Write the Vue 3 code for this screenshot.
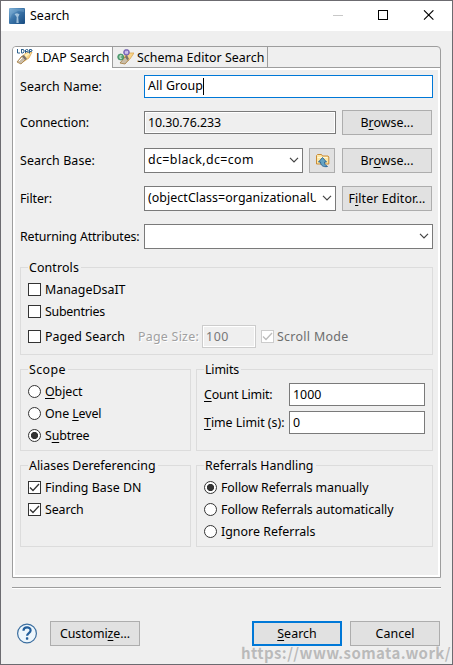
<script setup>
import { ref } from 'vue'

// Spreads a label's glyphs so that it fills the given width in pixels.
const vFit = {
  mounted(el, { value }) {
    const natural = el.getBoundingClientRect().width
    el.style.letterSpacing = (value - natural) / el.textContent.length + 'px'
  },
}

const controls = ref([
  { label: 'ManageDsaIT', width: 80.5, on: false },
  { label: 'Subentries', width: 60, on: false },
])
const scopes = [
  { pre: '', key: 'O', post: 'bject', width: 37.5, on: false },
  { pre: 'One ', key: 'L', post: 'evel', width: 56.5, on: false },
  { pre: 'S', key: 'u', post: 'btree', width: 44.5, on: true },
]
const aliases = [
  { label: 'Finding Base DN', width: 96.5 },
  { label: 'Search', width: 38.5 },
]
const referrals = [
  { label: 'Follow Referrals manually', width: 147.5, on: true },
  { label: 'Follow Referrals automatically', width: 172.5, on: false },
  { label: 'Ignore Referrals', width: 94.5, on: false },
]
</script>

<template>
  <div class="window">
    <header class="titlebar">
      <svg class="app-icon" width="16" height="16" viewBox="0 0 16 16">
        <defs>
          <linearGradient id="sky" x1="0" y1="0" x2="1" y2="1">
            <stop offset="0" stop-color="#7fb2d8" /><stop offset=".45" stop-color="#3d76aa" /><stop offset="1" stop-color="#174a80" />
          </linearGradient>
        </defs>
        <rect width="16" height="16" rx="1" fill="url(#sky)" />
        <path d="M1 1h14v3L9 3 3 6 1 11z" fill="#91bddd" opacity=".3" />
        <path d="M7.400 15 7.700 9 5.500 6 8 5.200l2.500 1L9.200 9l.5 6z" fill="#c4dced" opacity=".75" />
      </svg>
      <span v-fit="39.5" class="title">Search</span>
      <svg class="win-buttons" width="104" height="12" viewBox="0 0 104 12">
        <path d="M0 5.500h10" stroke="#c8c8c8" />
        <rect x="45.500" y=".5" width="9" height="9" fill="none" stroke="#000" />
        <path d="m91 .3 9.400 9.400m0-9.400L91 9.700" stroke="#000" stroke-width="1.100" />
      </svg>
    </header>

    <main class="folder">
      <nav class="tabs">
        <div class="tab active">
          <svg width="17" height="16" viewBox="0 0 17 16">
            <path d="m4 9 6-5 6-1-3 6-6 4z" fill="#f6d48a" stroke="#d99f45" stroke-width=".7" />
            <path d="m8 6 4-2 3 0-5 4z" fill="#fff0b8" />
            <path d="m1 13 5-6 3.500 3.500L5 15z" fill="#c9bda9" stroke="#a47b3c" stroke-width=".8" />
            <path d="m6 7 2-1 3 4-2 1z" fill="#77716e" /><path d="m3 12 3-3" stroke="#fff" />
            <path d="M1.500 0v4H4M5.500 0v4H7l1-1V1L7 .5H5.500M9.500 4V1l1-.5h1l.5.5v3m-2.500-1.500h2M13.500 4.500v-4H15l1 .5v1l-1 .5h-1.500" fill="none" stroke="#235a88" stroke-width=".95" />
          </svg>
          <span v-fit="73.5">LDAP Search</span>
        </div>
        <div class="tab">
          <svg width="17" height="16" viewBox="0 0 17 16">
            <path d="m5 9 6-5 6 0-4 6-5 4z" fill="#f6d48a" stroke="#d99f45" stroke-width=".7" />
            <path d="m3 14 5-6 3.500 3L8 15z" fill="#c9bda9" stroke="#a47b3c" stroke-width=".8" />
            <path d="m8 7 2-1 2 4-2 1z" fill="#77716e" />
            <circle cx="9.500" cy="3.300" r="2.900" fill="#8d79c8" stroke="#6753a8" stroke-width=".7" />
            <path d="M8.500 4.800V2.500h1v2.300m1-2.800v2.800" fill="none" stroke="#e9e3ff" stroke-width=".7" />
            <circle cx="3.700" cy="8" r="3" fill="#5da678" stroke="#31875b" stroke-width=".7" />
            <path d="M4.800 6.800H3v2.500h1.800" fill="none" stroke="#e2f5e8" stroke-width=".9" />
          </svg>
          <span v-fit="127.500">Schema Editor Search</span>
        </div>
      </nav>

      <section class="page">
        <div class="form">
          <span class="lbl"><span v-fit="82">Search Name:</span></span>
          <div class="field focus wide"><span v-fit="55">All Group</span><i class="caret"></i></div>

          <span class="lbl"><span v-fit="69">Connection:</span></span>
          <div class="field readonly"><span v-fit="73">10.30.76.233</span></div>
          <div class="btn"><span v-fit="53">B<u>r</u>owse...</span></div>

          <span class="lbl"><span v-fit="75">Search Base:</span></span>
          <div class="pair">
            <div class="combo">
              <span v-fit="106">dc=black,dc=com</span>
              <svg class="chev" width="10" height="6" viewBox="0 0 10 6"><path d="m1 .8 4 4 4-4" /></svg>
            </div>
            <div class="btn square">
              <svg width="15" height="15" viewBox="0 0 15 15">
                <path d="M1.500 11V2.500l1-1h4l1 1.500H13l.8 1v7z" fill="#fce7a7" stroke="#c98b37" />
                <path d="M2.500 4.500h10" stroke="#fff8da" />
                <path d="m7.500 4.500 4 4.500H9.500c0 2 .7 3.300 3 4.500-4 .8-7-1-7-4.500h-2z" fill="#65a3c2" stroke="#235f94" stroke-width=".9" />
              </svg>
            </div>
          </div>
          <div class="btn"><span v-fit="53">Br<u>o</u>wse...</span></div>

          <span class="lbl"><span v-fit="32">Filter:</span></span>
          <div class="combo">
            <span class="clip"><span v-fit="171">(objectClass=organizationalU</span></span>
            <svg class="chev" width="10" height="6" viewBox="0 0 10 6"><path d="m1 .8 4 4 4-4" /></svg>
          </div>
          <div class="btn"><span v-fit="77">F<u>i</u>lter Editor...</span></div>

          <span class="lbl"><span v-fit="119.500">Returning Attributes:</span></span>
          <div class="combo wide">
            <svg class="chev" width="10" height="6" viewBox="0 0 10 6"><path d="m1 .8 4 4 4-4" /></svg>
          </div>
        </div>

        <fieldset class="group g-controls">
          <legend><span v-fit="50">Controls</span></legend>
          <div v-for="c in controls" :key="c.label" class="opt"><i class="box"></i><span v-fit="c.width">{{ c.label }}</span></div>
          <div class="paging">
            <i class="box"></i><span v-fit="80" class="paged">Paged Search</span>
            <span v-fit="61" class="pagesize">Page Size:</span>
            <div class="field disabled"><span v-fit="23">100</span></div>
            <i class="box dim"><svg width="11" height="11" viewBox="0 0 11 11"><path d="m1 5.500 3 3 6-6.500" /></svg></i>
            <span v-fit="71.500" class="scroll">Scroll Mode</span>
          </div>
        </fieldset>

        <div class="groups">
          <fieldset class="group">
            <legend><span v-fit="37">Scope</span></legend>
            <div v-for="s in scopes" :key="s.key" class="opt">
              <i class="radio" :class="{ on: s.on }"></i>
              <span v-fit="s.width">{{ s.pre }}<u>{{ s.key }}</u>{{ s.post }}</span>
            </div>
          </fieldset>
          <fieldset class="group">
            <legend><span v-fit="34">Limits</span></legend>
            <div class="limit"><span class="limit-label"><span v-fit="68.500"><u>C</u>ount Limit:</span></span><div class="field"><span v-fit="28.500">1000</span></div></div>
            <div class="limit"><span class="limit-label"><span v-fit="80.500"><u>T</u>ime Limit (s):</span></span><div class="field"><span>0</span></div></div>
          </fieldset>
          <fieldset class="group">
            <legend><span v-fit="126.500">Aliases Dereferencing</span></legend>
            <div v-for="a in aliases" :key="a.label" class="opt">
              <i class="box"><svg width="11" height="11" viewBox="0 0 11 11"><path d="m1 5.500 3 3 6-6.500" /></svg></i>
              <span v-fit="a.width">{{ a.label }}</span>
            </div>
          </fieldset>
          <fieldset class="group">
            <legend><span v-fit="108.500">Referrals Handling</span></legend>
            <div v-for="r in referrals" :key="r.label" class="opt">
              <i class="radio" :class="{ on: r.on }"></i><span v-fit="r.width">{{ r.label }}</span>
            </div>
          </fieldset>
        </div>
      </section>
    </main>

    <div class="rule"></div>

    <footer class="actions">
      <svg class="help" width="22" height="22" viewBox="0 0 22 22">
        <circle cx="11" cy="10.500" r="9.400" fill="#edf6fc" stroke="#3b6e9f" stroke-width="1.200" />
        <path d="M7.500 7.800C7.500 3.200 14.600 3.500 14.600 7.400c0 2.700-3.500 2.700-3.500 5.400" fill="none" stroke="#235f9c" stroke-width="2.200" />
        <rect x="9.900" y="14.300" width="2.400" height="2.400" rx=".6" fill="#235f9c" />
      </svg>
      <div class="btn customize"><span v-fit="70">Customi<u>z</u>e...</span></div>
      <div class="btn primary"><span v-fit="39.500"><u>S</u>earch</span></div>
      <div class="btn"><span v-fit="39">Cancel</span></div>
    </footer>
    <span v-fit="210" class="watermark">https://www.somata.work/</span>
  </div>
</template>

<style>
body { margin: 0; background: #efefef; overflow: hidden; }
</style>

<style scoped>
* { box-sizing: border-box; }
.window {
  position: relative;
  width: 453px;
  height: 665px;
  border: 1px solid #6c6b70;
  background: #efefef;
  color: #000;
  font: 12.4px/16px "Noto Sans", "Noto Sans CJK SC", sans-serif;
  white-space: nowrap;
}
u { text-decoration: underline; text-decoration-thickness: 1px; text-underline-offset: 2px; }
svg { display: block; flex: none; }
i { display: block; flex: none; }
.titlebar { display: flex; align-items: center; height: 30px; padding: 0 15px 0 8px; background: #fff; }
.title { margin-left: 5px; }
.win-buttons { margin-left: auto; }
.folder {
  width: 429px;
  height: 532px;
  margin: 15px 0 0 11px;
  border: 1px solid #9d9d9d;
  border-radius: 4px 4px 0 0;
}
.tabs { display: flex; height: 21px; border-bottom: 1px solid #9d9d9d; }
.tab { display: flex; align-items: center; height: 20px; width: 155px; padding-left: 4px; border-right: 1px solid #9d9d9d; gap: 3px; }
.tab.active { width: 100px; height: 21px; padding: 0 0 1px 3px; background: #fff; border-radius: 3px 0 0 0; }
.tab span { padding-top: 1px; }
.page { height: 509px; padding: 5px 4px 0 5px; border: 2px solid #fff; }
.form {
  display: grid;
  grid-template-columns: 124px 192px 91px;
  grid-template-rows: 22px 25px 25px 25px 24px;
  row-gap: 13px;
  align-items: center;
}
.form > .btn { margin-left: 6px; }
.form > .wide { grid-column: 2 / 4; width: 289px; }
.lbl { padding-top: 1px; }
.field { display: flex; align-items: center; height: 23px; padding: 0 3px; border: 1px solid #7a7a7a; background: #fff; }
.focus { border-color: #0078d7; }
.caret { width: 1px; height: 17px; background: #000; }
.readonly { background: #efefef; box-shadow: inset 0 0 0 1px #fff; }
.combo { display: flex; align-items: center; height: 25px; padding: 0 3px 1px; border: 1px solid #7a7a7a; background: #fff; }
.clip { width: 168px; overflow: hidden; }
.chev { margin-left: auto; fill: none; stroke: #444; stroke-width: 1.2; }
.pair { display: flex; justify-content: space-between; }
.pair .combo { width: 159px; }
.btn { display: flex; align-items: center; justify-content: center; width: 90px; height: 25px; border: 1px solid #adadad; background: #e1e1e1; }
.pair .square { width: 26px; margin-right: 1px; }
.group { min-width: 0; margin: 0; padding: 3.5px 7px 0; border: 1px solid #dcdcdc; }
legend { height: 16px; padding: 0 2px 0 1px; line-height: 18px; }
.g-controls { width: 413px; height: 88px; height: 96px; margin-top: 11px; }
.opt { display: flex; align-items: center; height: 22px; gap: 4px; }
.box { width: 13px; height: 13px; border: 1px solid #333; background: #fff; }
.box svg { fill: none; stroke: #333; stroke-width: 1.3; }
.box.dim { border-color: #ccc; margin-left: 5px; }
.box.dim svg { stroke: #bcbcbc; }
.radio { width: 13px; height: 13px; border: 1px solid #333; border-radius: 50%; background: #fff; }
.radio.on { background: radial-gradient(circle at center, #333 0 3.3px, #fff 3.9px); }
.paging { display: flex; align-items: center; height: 28px; }
.paged { margin-left: 4px; }
.pagesize { margin-left: 13px; color: #a0a0a0; text-shadow: 1px 1px #fff; }
.disabled { width: 54px; margin-left: 3px; border-color: #ccc; background: #efefef; box-shadow: inset 0 0 0 1px #fff; color: #777; }
.scroll { margin-left: 3px; color: #6d6d6d; }
.groups { display: grid; grid-template-columns: 171px 237px; grid-template-rows: 90px 90px; column-gap: 5px; row-gap: 6px; margin-top: 6px; }
.limit { display: flex; align-items: center; height: 28px; }
.limit-label { width: 85px; }
.limit .field { width: 136px; }
.rule { width: 429px; height: 2px; margin: 9px 0 0 11px; border-top: 1px solid #9d9d9d; background: #fff; }
.actions { display: flex; align-items: center; margin: 32px 12px 0 15px; }
.customize { margin-left: 12px; }
.primary { margin-left: auto; margin-right: 8px; border: 2px solid #0078d7; }
.watermark { position: absolute; left: 240px; top: 642px; color: rgba(150, 150, 150, .6); font: bold 15px/20px "Noto Sans CJK SC", sans-serif; }
</style>
